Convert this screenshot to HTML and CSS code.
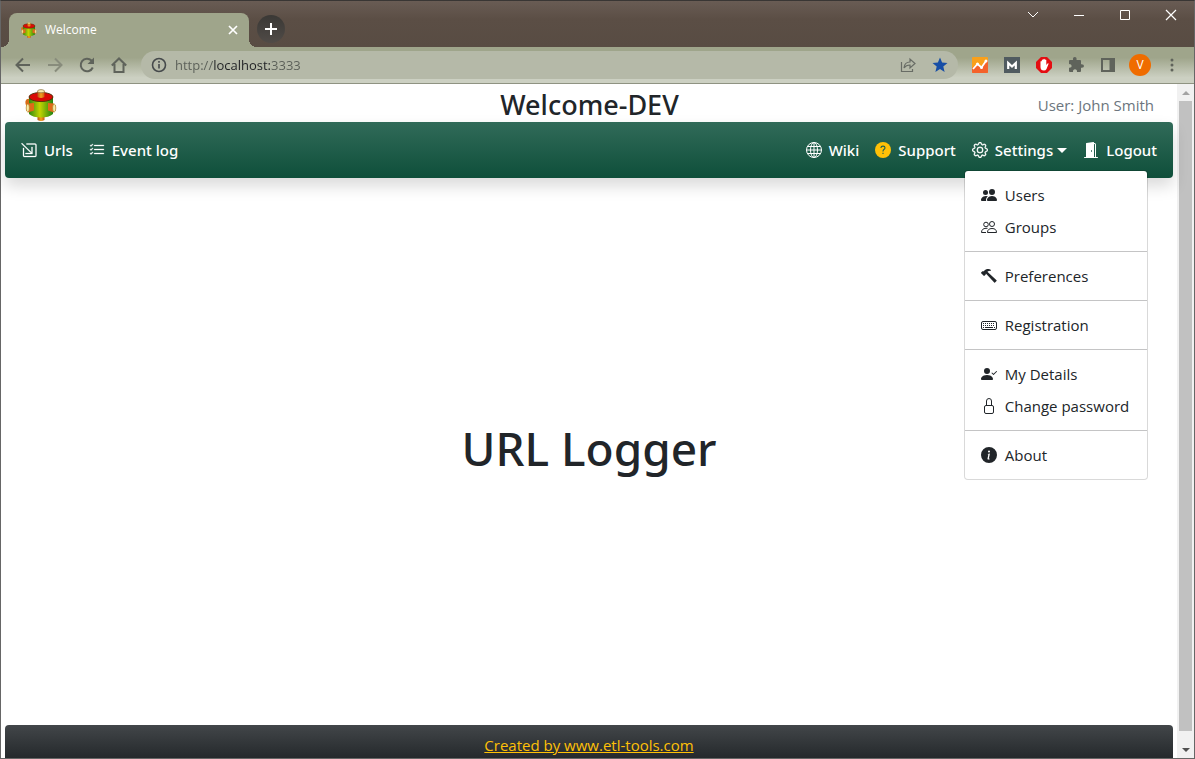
FILE: index.html
```html
<!DOCTYPE html>
<html lang="en">
<head>
<meta charset="utf-8">
<title>Welcome</title>
<link rel="stylesheet" href="styles.css">
</head>
<body>
<svg class="defs" aria-hidden="true">
  <defs>
    <linearGradient id="drum" x1="0" x2="1" y1="0" y2="0">
      <stop offset="0" stop-color="#2f8a12"/><stop offset=".45" stop-color="#c3d400"/><stop offset="1" stop-color="#1f8412"/>
    </linearGradient>
    <linearGradient id="knob" x1="0" x2="1" y1="0" y2="0">
      <stop offset="0" stop-color="#b95414"/><stop offset=".5" stop-color="#f5a01c"/><stop offset="1" stop-color="#c95a10"/>
    </linearGradient>
    <symbol id="logo" viewBox="0 0 32 32">
      <path d="M12.500 26h7v5q-3.500 2-7 0z" fill="url(#knob)"/>
      <path d="M.5 12q1-3 4.500-2v7H2q-2-1-1.500-5z" fill="#d96c16"/>
      <path d="M4 8v17q4 3.500 12 3.500T28 25V8z" fill="url(#drum)"/>
      <ellipse cx="16" cy="8" rx="12" ry="4.600" fill="#d90b05" stroke="#4c3209" stroke-width=".9"/>
      <path d="M12.500 2h7v6q-3.500 2-7 0z" fill="url(#knob)"/>
      <ellipse cx="16" cy="2.200" rx="3.500" ry="1.600" fill="#f8edaa" stroke="#755d2c" stroke-width=".6"/>
      <path d="M3 14.500l6-.5v7.500l-6 2zM29 14.500l-6-.5v7.500l6 2z" fill="#e06a18"/>
      <ellipse cx="2.800" cy="19" rx="1.600" ry="4" fill="#f8edaa" stroke="#b07b24" stroke-width=".7"/>
      <ellipse cx="29.200" cy="19" rx="1.600" ry="4" fill="#f8edaa" stroke="#b07b24" stroke-width=".7"/>
    </symbol>
  </defs>
</svg>
<div class="window">
  <header class="titlebar">
    <div class="tab">
      <svg class="favicon"><use href="#logo"/></svg>
      <span class="tab-title">Welcome</span>
      <button class="tab-close" aria-label="Close tab"><svg width="10" height="10" viewBox="0 0 10 10"><path d="M1 1l8 8M9 1L1 9" stroke="#fff" stroke-width="1.700"/></svg></button>
    </div>
    <button class="new-tab" aria-label="New tab"><svg width="12" height="12" viewBox="0 0 12 12"><path d="M6 0v12M0 6h12" stroke="#fff" stroke-width="2"/></svg></button>
    <div class="window-controls">
      <button aria-label="Search tabs"><svg width="12" height="12" viewBox="0 0 12 12"><path d="M1 3l5 5 5-5" fill="none" stroke="#fff"/></svg></button>
      <button aria-label="Minimize"><svg width="12" height="12" viewBox="0 0 12 12"><path d="M1 6.500h10" stroke="#fff"/></svg></button>
      <button aria-label="Maximize"><svg width="12" height="12" viewBox="0 0 12 12"><path d="M1.500 1.500h9v9h-9z" fill="none" stroke="#fff"/></svg></button>
      <button aria-label="Close window"><svg width="12" height="12" viewBox="0 0 12 12"><path d="M1 1l10 10M11 1L1 11" stroke="#fff" stroke-width="1.200"/></svg></button>
    </div>
  </header>

  <div class="toolbar">
    <button aria-label="Back"><svg width="16" height="16" viewBox="0 0 16 16" fill="none" stroke="#5f635b" stroke-width="2"><path d="M15 8H2M8 1.500L1.500 8 8 14.500"/></svg></button>
    <button aria-label="Forward"><svg width="16" height="16" viewBox="0 0 16 16" fill="none" stroke="#888c7c" stroke-width="2"><path d="M1 8h13M8 1.500L14.500 8 8 14.500"/></svg></button>
    <button aria-label="Reload"><svg width="16" height="16" viewBox="0 0 16 16" fill="none" stroke="#5f635b" stroke-width="2"><path d="M13.800 10.500A6.300 6.300 0 1 1 12.500 3.500L14 5"/><path d="M15 .5V7H8.500z" fill="#5f635b" stroke="none"/></svg></button>
    <button aria-label="Home"><svg width="16" height="16" viewBox="0 0 16 16" fill="none" stroke="#5f635b" stroke-width="2"><path d="M.8 8.500L8 1.500l7.200 7M3.500 7v8h9V7"/></svg></button>
    <div class="address">
      <svg width="16" height="16" viewBox="0 0 16 16" fill="none" stroke="#45494b" stroke-width="1.600"><circle cx="8" cy="8" r="6.500"/><path d="M8 7v4.500M8 4v1.700"/></svg>
      <input class="url" type="text" aria-label="Address" value="http://localhost:3333" spellcheck="false">
      <button aria-label="Share"><svg width="16" height="16" viewBox="0 0 16 16" fill="none" stroke="#686c65" stroke-width="1.200"><path d="M1.500 5v9.500h11V12M4 11q.5-6 6-6V2l5 4.500-5 4.500V8Q6 8 4 11z"/></svg></button>
      <button aria-label="Bookmark"><svg width="16" height="16" viewBox="0 0 16 16" fill="#174ea6"><path d="M8 .5l2.100 5.100 5.400.4-4.200 3.600 1.300 5.400L8 12.100l-4.600 2.900 1.300-5.400L.5 6l5.400-.4z"/></svg></button>
    </div>
    <div class="extensions">
      <button aria-label="Analytics"><svg width="16" height="16" viewBox="0 0 16 16"><rect width="16" height="16" rx="1" fill="#f9a01b"/><path d="M0 11l5-4 4 3 7-7v12q0 1-1 1H1q-1 0-1-1z" fill="#f4622b"/><path d="M1 12l4.500-5 4 3.500L14 4" fill="none" stroke="#fff" stroke-width="1.800"/><circle cx="5.500" cy="7" r="1.500" fill="#fff"/><circle cx="9.500" cy="10.500" r="1.500" fill="#fff"/><circle cx="14" cy="4" r="1.500" fill="#fff"/></svg></button>
      <button aria-label="Mail"><svg width="16" height="16" viewBox="0 0 16 16"><path d="M0 0h16v16H0z" fill="#505b60"/><path d="M4.200 12V6L8 9.500 11.800 6v6" fill="none" stroke="#fff" stroke-width="2.200"/></svg></button>
      <button aria-label="Blocker"><svg width="16" height="16" viewBox="0 0 16 16"><path d="M5 0h6l5 5v6l-5 5H5l-5-5V5z" fill="#e40d12"/><path d="M4.500 8V4.500q.8-1 1.300 0V3q.9-1 1.500 0v-.7q.8-1 1.500 0V3q1-1 1.500 0v5l1.200-1.500q1.300-.5 1 .5L10.500 12Q9.700 13.500 8 13.500 4.500 13.500 4.500 10z" fill="#fff"/></svg></button>
      <button aria-label="Extensions"><svg width="16" height="16" viewBox="0 0 16 16" fill="#5f635b"><path d="M1 4q0-1 1-1h3q-.4-3 1.800-3T8.500 3H12q1 0 1 1v3.200q3-.3 3 1.800t-3 1.700V14q0 1-1 1H9q.2-2.700-2-2.700T5 15H2q-1 0-1-1v-3.200q2.700.2 2.700-1.800T1 7z"/></svg></button>
      <button aria-label="Side panel"><svg width="16" height="16" viewBox="0 0 16 16"><path d="M2 2h12v12H2z" fill="none" stroke="#5f635b" stroke-width="2"/><path d="M9.500 2H14v12H9.500z" fill="#5f635b"/></svg></button>
      <button class="avatar">V</button>
      <button aria-label="Browser menu"><svg width="16" height="16" viewBox="0 0 16 16" fill="#5f635b"><circle cx="8" cy="3" r="1.500"/><circle cx="8" cy="8" r="1.500"/><circle cx="8" cy="13" r="1.500"/></svg></button>
    </div>
  </div>

  <div class="viewport">
    <div class="page">
      <div class="page-head">
        <svg class="logo"><use href="#logo"/></svg>
        <h1>Welcome-DEV</h1>
        <span class="user">User: John Smith</span>
      </div>
      <nav class="navbar">
        <a class="nav-link" href="#"><svg class="icon" viewBox="0 0 16 16"><path fill-rule="evenodd" d="M5.500 1.500H14A1.500 1.500 0 0 1 15.500 3v10.500A1.500 1.500 0 0 1 14 15H3.500A1.500 1.500 0 0 1 2 13.500V6h1v7.500a.5.500 0 0 0 .5.500H14a.5.500 0 0 0 .5-.5V3a.5.500 0 0 0-.5-.5H5.500zM.3 1.700L1 1l9.500 9.300V5h1v7h-7v-1h5.300z"/></svg>Urls</a>
        <a class="nav-link" href="#"><svg class="icon" viewBox="0 0 16 16"><path fill-rule="evenodd" d="M5 11.500a.5.500 0 0 1 .5-.5h9a.5.500 0 0 1 0 1h-9a.5.500 0 0 1-.5-.5zm0-4a.5.500 0 0 1 .5-.5h9a.5.500 0 0 1 0 1h-9a.5.500 0 0 1-.5-.5zm0-4a.5.500 0 0 1 .5-.5h9a.5.500 0 0 1 0 1h-9a.5.500 0 0 1-.5-.5zM3.854 2.146a.5.500 0 0 1 0 .708l-1.500 1.500a.5.500 0 0 1-.708 0l-.5-.5a.5.500 0 1 1 .708-.708L2 3.293l1.146-1.147a.5.500 0 0 1 .708 0zm0 4a.5.500 0 0 1 0 .708l-1.500 1.500a.5.500 0 0 1-.708 0l-.5-.5a.5.500 0 1 1 .708-.708L2 7.293l1.146-1.147a.5.500 0 0 1 .708 0zm0 4a.5.500 0 0 1 0 .708l-1.500 1.500a.5.500 0 0 1-.708 0l-.5-.5a.5.500 0 0 1 .708-.708l.146.147 1.146-1.147a.5.500 0 0 1 .708 0z"/></svg>Event log</a>
        <div class="spacer"></div>
        <a class="nav-link" href="#"><svg class="icon line" viewBox="0 0 16 16"><circle cx="8" cy="8" r="7.500"/><ellipse cx="8" cy="8" rx="3.500" ry="7.500"/><path d="M8 .5v15M.5 8h15M1.800 4.500h12.400M1.800 11.500h12.400"/></svg>Wiki</a>
        <a class="nav-link" href="#"><svg class="icon plain" viewBox="0 0 16 16"><circle cx="8" cy="8" r="8" fill="#ffc107"/><path d="M5.900 6q.1-1.900 2.100-1.900 2 0 2 1.700 0 1-1.100 1.700Q8 8.100 8 9.500M8 10.700v1.400" fill="none" stroke="#1f5f4c" stroke-width="1.100"/></svg>Support</a>
        <div class="dropdown">
          <button class="nav-link" aria-expanded="true" aria-controls="settings-menu"><svg class="icon" viewBox="0 0 16 16"><path d="M8 4.754a3.246 3.246 0 1 0 0 6.492 3.246 3.246 0 0 0 0-6.492zM5.754 8a2.246 2.246 0 1 1 4.492 0 2.246 2.246 0 0 1-4.492 0z"/><path d="M9.796 1.343c-.527-1.790-3.065-1.790-3.592 0l-.094.319a.873.873 0 0 1-1.255.520l-.292-.160c-1.640-.892-3.433.902-2.540 2.541l.159.292a.873.873 0 0 1-.520 1.255l-.319.094c-1.790.527-1.790 3.065 0 3.592l.319.094a.873.873 0 0 1 .520 1.255l-.160.292c-.892 1.640.901 3.434 2.541 2.540l.292-.159a.873.873 0 0 1 1.255.520l.094.319c.527 1.790 3.065 1.790 3.592 0l.094-.319a.873.873 0 0 1 1.255-.520l.292.160c1.640.893 3.434-.902 2.540-2.541l-.159-.292a.873.873 0 0 1 .520-1.255l.319-.094c1.790-.527 1.790-3.065 0-3.592l-.319-.094a.873.873 0 0 1-.520-1.255l.160-.292c.893-1.640-.902-3.433-2.541-2.540l-.292.159a.873.873 0 0 1-1.255-.520l-.094-.319zm-2.633.283c.246-.835 1.428-.835 1.674 0l.094.319a1.873 1.873 0 0 0 2.693 1.115l.291-.160c.764-.415 1.600.420 1.184 1.185l-.159.292a1.873 1.873 0 0 0 1.116 2.692l.318.094c.835.246.835 1.428 0 1.674l-.319.094a1.873 1.873 0 0 0-1.115 2.693l.160.291c.415.764-.420 1.600-1.185 1.184l-.291-.159a1.873 1.873 0 0 0-2.693 1.116l-.094.318c-.246.835-1.428.835-1.674 0l-.094-.319a1.873 1.873 0 0 0-2.692-1.115l-.292.160c-.764.415-1.600-.420-1.184-1.185l.159-.291A1.873 1.873 0 0 0 1.945 8.930l-.319-.094c-.835-.246-.835-1.428 0-1.674l.319-.094A1.873 1.873 0 0 0 3.060 4.377l-.160-.292c-.415-.764.420-1.600 1.185-1.184l.292.159a1.873 1.873 0 0 0 2.692-1.115l.094-.319z"/></svg><span class="caret-label">Settings<svg class="caret" viewBox="0 0 10 5"><path d="M0 0h10L5 5z"/></svg></span></button>
          <div class="menu" id="settings-menu">
            <a href="#"><svg class="icon" viewBox="0 0 16 16"><path d="M7 14s-1 0-1-1 1-4 5-4 5 3 5 4-1 1-1 1H7zm4-6a3 3 0 1 0 0-6 3 3 0 0 0 0 6z"/><path fill-rule="evenodd" d="M5.216 14A2.238 2.238 0 0 1 5 13c0-1.355.680-2.750 1.936-3.720A6.325 6.325 0 0 0 5 9c-4 0-5 3-5 4s1 1 1 1h4.216z"/><path d="M4.500 8a2.500 2.500 0 1 0 0-5 2.500 2.500 0 0 0 0 5z"/></svg>Users</a>
            <a href="#"><svg class="icon line" viewBox="0 0 16 16"><circle cx="11" cy="5" r="2.500"/><circle cx="5" cy="5.500" r="2.300"/><path d="M6.500 13.500q0-4 4.500-4t4.500 4zM5 13.500H.5q0-4 4.500-4.200h1.500"/></svg>Groups</a>
            <hr>
            <a href="#"><svg class="icon" viewBox="0 0 16 16"><path d="M9.972 2.508a.5.500 0 0 0-.160-.556l-.178-.129a5.009 5.009 0 0 0-2.076-.783C6.215.862 4.504 1.229 2.840 3.133H1.786a.5.500 0 0 0-.354.147L.146 4.567a.5.500 0 0 0 0 .706l2.571 2.579a.5.500 0 0 0 .708 0l1.286-1.290a.5.500 0 0 0 .146-.353V5.570l8.387 8.873A.5.500 0 0 0 14 14.500l1.500-1.500a.5.500 0 0 0 .017-.689l-9.129-8.630c.747-.456 1.772-.839 3.112-.839a.5.500 0 0 0 .472-.334z"/></svg>Preferences</a>
            <hr>
            <a href="#"><svg class="icon line" viewBox="0 0 16 16"><rect x=".5" y="4.500" width="15" height="8" rx="1.500"/><path d="M2 6.500h12M2 8.500h12" stroke-dasharray="1 1"/><path d="M2 10.500h1M4 10.500h8M13 10.500h1"/></svg>Registration</a>
            <hr>
            <a href="#"><svg class="icon" viewBox="0 0 16 16"><path fill-rule="evenodd" d="M15.854 5.146a.5.500 0 0 1 0 .708l-3 3a.5.500 0 0 1-.708 0l-1.500-1.500a.5.500 0 0 1 .708-.708L12.500 7.793l2.646-2.647a.5.500 0 0 1 .708 0z"/><path d="M1 14s-1 0-1-1 1-4 6-4 6 3 6 4-1 1-1 1H1zm5-6a3 3 0 1 0 0-6 3 3 0 0 0 0 6z"/></svg>My Details</a>
            <a href="#"><svg class="icon line" viewBox="0 0 16 16"><path d="M5.500 7.500V3Q5.500.5 8 .5t2.500 2.500v4.500"/><rect x="3.500" y="7.500" width="9" height="8" rx="1.500"/></svg>Change password</a>
            <hr>
            <a href="#"><svg class="icon" viewBox="0 0 16 16"><path d="M8 16A8 8 0 1 0 8 0a8 8 0 0 0 0 16zm.930-9.412-1 4.705c-.070.340.029.533.304.533.194 0 .487-.070.686-.246l-.088.416c-.287.346-.920.598-1.465.598-.703 0-1.002-.422-.808-1.319l.738-3.468c.064-.293.006-.399-.287-.470l-.451-.081.082-.381 2.290-.287zM8 5.500a1 1 0 1 1 0-2 1 1 0 0 1 0 2z"/></svg>About</a>
          </div>
        </div>
        <a class="nav-link" href="#"><svg class="icon plain" viewBox="0 0 16 16"><path d="M1.500 15a.5.500 0 0 0 0 1h13a.5.500 0 0 0 0-1H13V2.500A1.500 1.500 0 0 0 11.500 1H11V.5a.5.500 0 0 0-.570-.495l-7 1A.5.500 0 0 0 3 1.500V15H1.500zM11 2h.5a.5.500 0 0 1 .5.500V15h-1V2zm-2.500 8c-.276 0-.5-.448-.5-1s.224-1 .5-1 .5.448.5 1-.224 1-.5 1z"/></svg>Logout</a>
      </nav>
      <main class="main"><h2>URL Logger</h2></main>
      <footer class="footer"><a href="#">Created by www.etl-tools.com</a></footer>
    </div>
    <div class="scrollbar">
      <button class="up" aria-label="Scroll up"><svg width="8" height="4" viewBox="0 0 8 4"><path d="M0 4l4-4 4 4z"/></svg></button>
      <div class="track"><div class="thumb"></div></div>
      <button class="down" aria-label="Scroll down"><svg width="8" height="4" viewBox="0 0 8 4"><path d="M0 0h8L4 4z"/></svg></button>
    </div>
  </div>
</div>
</body>
</html>
```
FILE: styles.css
```css
* { box-sizing: border-box; }
body { margin: 0; font-family: "Open Sans", "Noto Sans", sans-serif; font-size: 15px; line-height: 24px; color: #212529; }
button { border: 0; padding: 0; background: none; font: inherit; color: inherit; display: flex; align-items: center; justify-content: center; }
a { color: inherit; text-decoration: none; }
svg { display: block; flex: none; }
.defs { position: absolute; width: 0; height: 0; }

.window { height: 100vh; display: flex; flex-direction: column; border: 1px solid #666; border-top-color: #393634; overflow: hidden; }

.titlebar { height: 46px; flex: none; display: flex; align-items: flex-end; padding-left: 8px; background: linear-gradient(#695c54, #5b4e45 40%, #584c43); }
.tab { position: relative; width: 240px; height: 34px; padding: 0 11px 0 12px; display: flex; align-items: center; gap: 8px; background: #9fa58b; border-radius: 8px 8px 0 0; color: #fff; font-size: 12px; }
.tab::before, .tab::after { content: ""; position: absolute; bottom: 0; width: 8px; height: 8px; }
.tab::before { right: 100%; background: radial-gradient(circle at 0 0, transparent 8px, #9fa58b 8px); }
.tab::after { left: 100%; background: radial-gradient(circle at 100% 0, transparent 8px, #9fa58b 8px); }
.favicon { width: 16px; height: 16px; }
.tab-title { flex: 1; }
.new-tab { width: 28px; height: 28px; margin: 0 0 4px 8px; border-radius: 50%; background: linear-gradient(#3a3835, #504b47); }
.window-controls { margin-left: auto; align-self: flex-start; display: flex; }
.window-controls button { width: 46px; height: 28px; }

.toolbar { height: 37px; flex: none; display: flex; align-items: center; gap: 16px; padding: 0 14px; background: linear-gradient(#9fa58b 30%, #ccd0c2 85%); border-bottom: 1px solid #8f9382; }
.address { flex: 1; height: 28px; display: flex; align-items: center; gap: 16px; padding: 0 10px; margin: 0 -2px; background: #b5b9a8; border-radius: 14px; }
.url { flex: 1; min-width: 0; margin-left: -8px; padding: 0; border: 0; outline: 0; font: inherit; font-size: 13px; color: transparent; caret-color: #202124; background: linear-gradient(90deg, #5a5e57 39px, #202124 39px 95px, #5a5e57 95px); background-clip: text; }
.extensions { display: flex; align-items: center; gap: 16px; }
.extensions .avatar { width: 22px; height: 22px; margin: 0 -3px; border-radius: 50%; background: #ef6c00; color: #fff; font-size: 12px; }

.viewport { flex: 1; min-height: 0; display: flex; }
.page { flex: 1; display: flex; flex-direction: column; padding: 0 4px; background: #fff; }
.page-head { height: 38px; display: grid; grid-template-columns: 1fr auto 1fr; align-items: center; padding: 4px 19px 0 20px; }
.logo { width: 32px; height: 32px; }
h1, h2 { margin: 0; font-family: "Noto Sans", "Open Sans", sans-serif; font-weight: 500; }
h1 { font-size: 27px; line-height: 32px; }
.user { justify-self: end; color: #6c757d; }
.navbar { position: relative; height: 56px; display: flex; align-items: center; padding: 0 8px; border-radius: 4px; background: linear-gradient(#316b59, #0e4f3a); box-shadow: 0 8px 16px rgba(0, 0, 0, .15); color: #fff; }
.spacer { flex: 1; }
.nav-link { display: flex; align-items: center; gap: 7px; padding: 8px; font-family: "Noto Sans", "Open Sans", sans-serif; font-weight: 500; }
.icon { width: 16px; height: 16px; fill: currentColor; }
.icon.line { fill: none; stroke: currentColor; }
.nav-link .icon:not(.line):not(.plain) { stroke: currentColor; stroke-width: .3; }
.caret-label { display: flex; align-items: center; gap: 4px; }
.caret { width: 10px; height: 5px; fill: currentColor; }
.dropdown { position: relative; }
.menu { position: absolute; top: 100%; left: 0; min-width: 184px; padding: 8px 0; background: #fff; background-clip: padding-box; border: 1px solid rgba(0, 0, 0, .15); border-radius: 4px; color: #212529; white-space: nowrap; z-index: 1; }
.menu a { display: flex; align-items: center; gap: 8px; padding: 4px 16px; }
.menu hr { margin: 8px 0; border: 0; border-top: 1px solid #c4c4c5; }
.main { flex: 1; display: flex; align-items: center; justify-content: center; padding-bottom: 8px; }
h2 { font-size: 46px; line-height: 56px; }
.footer { height: 33px; padding-top: 8px; text-align: center; border-radius: 4px 4px 0 0; background: linear-gradient(#424649, #25292c); color: #ffc107; }
.footer a { text-decoration: underline; }

.scrollbar { width: 17px; display: flex; flex-direction: column; background: #f1f1f1; }
.scrollbar button { width: 100%; height: 17px; flex: none; fill: #505050; }
.scrollbar .up { fill: #a3a3a3; }
.track { flex: 1; padding: 0 2px; }
.thumb { height: 98.500%; background: #c1c1c1; }
```
